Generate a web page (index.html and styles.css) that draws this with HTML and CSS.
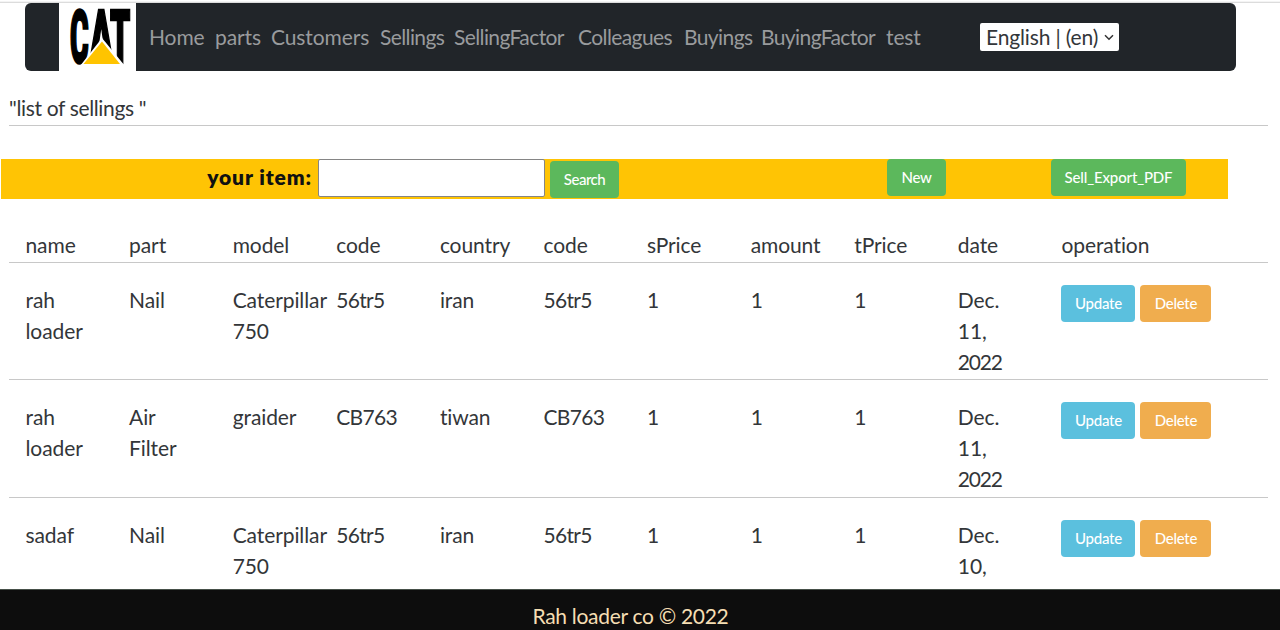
FILE: index.html
```
<!DOCTYPE html>
<html lang="en">
<head>
<meta charset="utf-8">
<title>list of sellings</title>
<link rel="stylesheet" href="styles.css">
</head>
<body>
<div class="page">
  <header class="navbar">
    <a class="logo" href="#">
      <svg width="77" height="68" viewBox="0 0 77 68" role="img" aria-label="CAT">
        <g class="logo-letters">
          <text transform="translate(11 60) scale(.38 1)">C</text>
          <text transform="translate(30.500 60) scale(.46 1)">A</text>
          <text transform="translate(51 60) scale(.43 1)">T</text>
        </g>
        <path d="M43 35 21 63H66Z" fill="#fff"/>
        <path d="M43 38.500 24.500 61H61Z" fill="#ffc400"/>
      </svg>
    </a>
    <nav class="links">
      <a href="#">Home</a><a href="#">parts</a><a href="#">Customers</a><a class="tight" href="#">Sellings</a><a class="tight" href="#">SellingFactor</a><a class="tight" href="#">Colleagues</a><a class="tight" href="#">Buyings</a><a class="tight" href="#">BuyingFactor</a><a href="#">test</a>
    </nav>
    <button class="lang"><span>English | (en)</span><svg width="10" height="7" viewBox="0 0 10 7"><path d="M1 1.200 5 5.200 9 1.200" fill="none" stroke="#333" stroke-width="1.500"/></svg></button>
  </header>
  <h1 class="title">"list of sellings "</h1>
  <form class="toolbar">
    <label class="label" for="item">your item:</label>
    <input class="field" id="item" type="text">
    <button class="btn green search" type="button">Search</button>
    <button class="btn green new" type="button">New</button>
    <button class="btn green export" type="button">Sell_Export_PDF</button>
  </form>
  <main class="list">
    <div class="row head"><span>name</span><span>part</span><span>model</span><span>code</span><span>country</span><span>code</span><span>sPrice</span><span>amount</span><span>tPrice</span><span>date</span><span>operation</span></div>
    <div class="row"><span>rah<br>loader</span><span>Nail</span><span>Caterpillar<br>750</span><span class="code">56tr5</span><span>iran</span><span class="code">56tr5</span><span class="num">1</span><span class="num">1</span><span class="num">1</span><span>Dec.<br>11,<br><span class="year">2022</span></span><span class="ops"><button class="btn blue">Update</button><button class="btn orange">Delete</button></span></div>
    <div class="row"><span>rah<br>loader</span><span>Air<br>Filter</span><span>graider</span><span class="code">CB763</span><span>tiwan</span><span class="code">CB763</span><span class="num">1</span><span class="num">1</span><span class="num">1</span><span>Dec.<br>11,<br><span class="year">2022</span></span><span class="ops"><button class="btn blue">Update</button><button class="btn orange">Delete</button></span></div>
    <div class="row"><span>sadaf</span><span>Nail</span><span>Caterpillar<br>750</span><span class="code">56tr5</span><span>iran</span><span class="code">56tr5</span><span class="num">1</span><span class="num">1</span><span class="num">1</span><span>Dec.<br>10,</span><span class="ops"><button class="btn blue">Update</button><button class="btn orange">Delete</button></span></div>
  </main>
  <footer class="footer">Rah loader co © 2022</footer>
</div>
</body>
</html>
```
FILE: styles.css
```
*, *::before { box-sizing: border-box; }
body { margin: 0; background: #fff; color: #333639; font: 21px/31px "Gill Sans MT", "Gill Sans", Lato, sans-serif; font-variant-ligatures: none; letter-spacing: -.1px; }
button { font: inherit; letter-spacing: inherit; border: 0; margin: 0; }
.page { height: 630px; overflow: hidden; display: flex; flex-direction: column; border-top: 1px solid #fff; }
.page::before { content: ""; flex: none; height: 2px; border-top: 1px solid #f4f4f4; border-bottom: 1px solid #dcdcdc; }
.navbar { flex: none; display: flex; align-items: center; width: 1211px; height: 68px; margin-left: 25px; padding-left: 34px; background: #212529; border-radius: 6px; }
.logo { display: block; width: 77px; height: 68px; background: #fff; }
.logo svg { display: block; overflow: visible; }
.logo-letters { font: 900 75px Roboto, sans-serif; fill: #000; stroke: #000; stroke-width: 2px; }
.logo-letters text { vector-effect: non-scaling-stroke; }
.links { display: grid; grid-template-columns: 66px 56px 109px 74px 124px 106px 77px 125px 46px; margin: -1px 0 0 13px; }
.links a { color: #999b9d; text-decoration: none; white-space: nowrap; }
.links .tight { letter-spacing: -.6px; }
.lang { display: flex; align-items: center; justify-content: space-between; width: 139px; height: 28px; margin-left: 48px; padding: 0 5px 0 6px; background: #fff; color: #333639; border-radius: 2px; line-height: 28px; letter-spacing: -.15px; white-space: nowrap; }
.title { flex: none; height: 55px; margin: 0 12px 0 9px; padding-top: 21px; border-bottom: 1px solid #c8c8c8; font-size: 21px; font-weight: 400; line-height: 31px; letter-spacing: -.35px; }
.toolbar { flex: none; display: flex; align-items: flex-start; width: 1227px; height: 40px; margin: 33px 0 0 1px; background: #ffc404; }
.label { width: 317px; padding-right: 6px; text-align: right; color: #111; font-weight: 800; line-height: 36px; letter-spacing: .9px; }
.field { width: 227px; height: 38px; border: 1px solid #858585; border-radius: 2px; background: #fff; }
.btn { height: 37px; padding: 0; border-radius: 4px; color: #fff; font-size: 15px; font-weight: 500; line-height: 37px; letter-spacing: -.25px; text-align: center; white-space: nowrap; }
.green { background: #5cb85c; }
.blue { background: #5bc0de; width: 74px; }
.orange { background: #f0ad4e; width: 71px; }
.search { width: 69px; margin: 2px 0 0 5px; letter-spacing: -.5px; }
.new { width: 59px; margin-left: 268px; }
.export { width: 135px; margin-left: 105px; letter-spacing: -.15px; }
.list { flex: 1; min-height: 0; overflow: hidden; margin: 0 12px 0 9px; }
.row { display: grid; grid-template-columns: repeat(10, 103.600px) 1fr; height: 117.300px; padding: 21px 0 0 16.500px; border-bottom: 1px solid #c8c8c8; white-space: nowrap; }
.head { height: 64px; padding-top: 30px; }
.code { letter-spacing: -.7px; }
.year { letter-spacing: -1.200px; }
.ops { display: flex; align-items: flex-start; gap: 5px; padding-top: 1px; }
.footer { flex: none; height: 41px; padding: 10px 19px 0 0; background: #0d0d0d; color: #f5deb3; text-align: center; line-height: 31px; letter-spacing: -.3px; border-top: 1px solid #465049; }
```
